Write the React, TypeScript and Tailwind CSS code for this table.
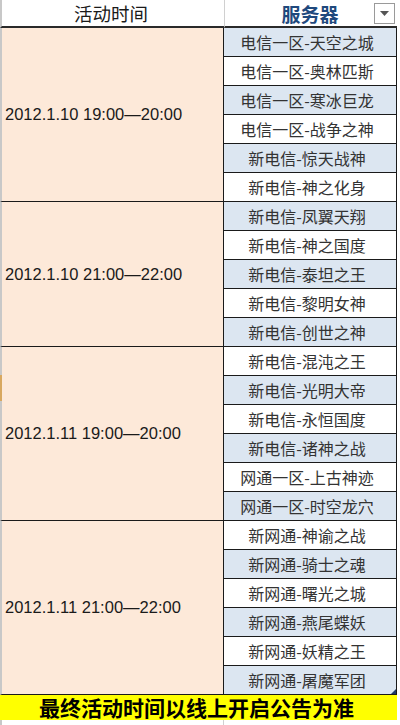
import React from "react";

const groups = [
  {
    date: "2012.1.10 19:00—20:00",
    servers: ["电信一区-天空之城", "电信一区-奥林匹斯", "电信一区-寒冰巨龙", "电信一区-战争之神", "新电信-惊天战神", "新电信-神之化身"],
  },
  {
    date: "2012.1.10 21:00—22:00",
    servers: ["新电信-凤翼天翔", "新电信-神之国度", "新电信-泰坦之王", "新电信-黎明女神", "新电信-创世之神"],
  },
  {
    date: "2012.1.11 19:00—20:00",
    servers: ["新电信-混沌之王", "新电信-光明大帝", "新电信-永恒国度", "新电信-诸神之战", "网通一区-上古神迹", "网通一区-时空龙穴"],
  },
  {
    date: "2012.1.11 21:00—22:00",
    servers: ["新网通-神谕之战", "新网通-骑士之魂", "新网通-曙光之城", "新网通-燕尾蝶妖", "新网通-妖精之王", "新网通-屠魔军团"],
  },
];

export default function App() {
  let idx = 0;
  return (
    <div
      className="w-[400px] h-[725px] bg-white overflow-hidden flex flex-col"
      style={{ fontFamily: '"Noto Sans CJK SC", "Liberation Sans", sans-serif' }}
    >
      {/* header */}
      <div className="flex h-[28px] shrink-0">
        <div className="w-[224px] border-l-2 border-l-[#c8c8c8] border-b-2 border-b-[#2a2a2a] bg-white flex items-center justify-center text-[18.5px] text-[#1a1a1a] leading-none pr-[4px]">
          活动时间
        </div>
        <div className="w-[173px] border-b-2 border-b-[#2a2a2a] border-l border-l-[#d0d0d0] bg-white flex items-center relative">
          <span className="flex-1 text-center text-[19px] font-bold text-[#1f497d] leading-none pr-[2px]">服务器</span>
          <div className="absolute right-[2px] top-[3px] w-[21px] h-[21px] border border-[#9a9a9a] bg-white flex items-center justify-center">
            <svg width="9" height="5" viewBox="0 0 9 5">
              <path d="M0 0 L9 0 L4.5 5 Z" fill="#555" />
            </svg>
          </div>
        </div>
      </div>

      {/* body */}
      <div className="flex flex-col shrink-0">
        {groups.map((g, gi) => (
          <div key={gi} className="flex">
            <div className="w-[224px] bg-[#fde9d9] border-l-2 border-l-[#c8c8c8] border-r border-r-[#1a1a1a] border-b border-b-[#1a1a1a] flex items-center pl-[3px] relative">
              <span
                className="text-[16.5px] text-[#1a1a1a] leading-none"
                style={{ fontFamily: '"Liberation Sans", "Noto Sans CJK SC", sans-serif' }}
              >
                {g.date}
              </span>
              {gi === 2 && <div className="absolute left-[-2px] top-[28px] w-[2px] h-[26px] bg-[#d8a860]" />}
            </div>
            <div className="w-[173px] flex flex-col">
              {g.servers.map((s, si) => {
                const blue = idx % 2 === 0;
                idx++;
                const last = gi === groups.length - 1 && si === g.servers.length - 1;
                return (
                  <div
                    key={si}
                    className={`h-[29px] border-r border-b border-[#1a1a1a] flex items-center justify-center text-[16px] text-[#333] leading-none relative pr-[6px] ${
                      blue ? "bg-[#dce6f1]" : "bg-white"
                    }`}
                  >
                    {s}
                    {last && (
                      <svg className="absolute right-0 bottom-0" width="5" height="5" viewBox="0 0 5 5">
                        <path d="M5 0 L5 5 L0 5 Z" fill="#1f3a6a" />
                      </svg>
                    )}
                  </div>
                );
              })}
            </div>
          </div>
        ))}
      </div>

      {/* footer */}
      <div className="h-[25px] w-[397px] shrink-0 bg-[#ffff00] flex items-center justify-center text-[21px] font-bold text-black leading-none pr-[4px]">
        最终活动时间以线上开启公告为准
      </div>
      <div className="flex flex-1">
        <div className="w-[224px] border-l-2 border-l-[#c8c8c8] border-r border-r-[#d0d0d0]" />
      </div>
    </div>
  );
}
